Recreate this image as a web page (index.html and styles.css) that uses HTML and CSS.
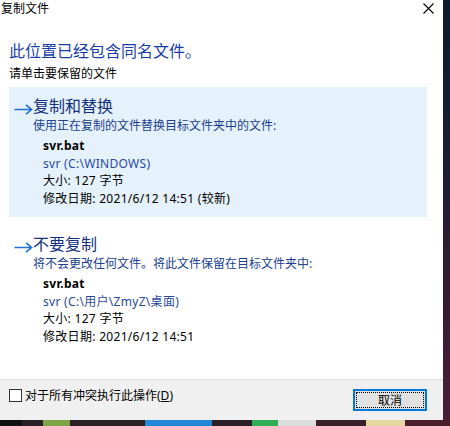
FILE: index.html
```html
<!DOCTYPE html>
<html lang="zh-CN">
<head>
  <meta charset="UTF-8">
  <title>复制文件</title>
  <link rel="stylesheet" href="styles.css">
</head>
<body>
  <div class="screen">
    <div class="dialog">

      <!-- title bar -->
      <div class="titlebar">
        <span class="title">复制文件</span>
        <svg class="close" width="11" height="11" viewBox="0 0 11 11">
          <path d="M0.5 0.5 L10.5 10.5 M10.5 0.5 L0.5 10.5" stroke="#000" stroke-width="1.1" fill="none"/>
        </svg>
      </div>

      <div class="content">
        <h1 class="instruction">此位置已经包含同名文件。</h1>
        <p class="hint">请单击要保留的文件</p>

        <!-- replace -->
        <div class="option selected">
          <svg class="arrow" width="19" height="11" viewBox="0 0 19 11">
            <path d="M0.5 5.5 H17.5 M12 0.8 L17.6 5.5 L12 10.2" stroke="#1f6fd8" stroke-width="1.6" fill="none"/>
          </svg>
          <div class="option-body">
            <div class="option-title">复制和替换</div>
            <div class="option-note">使用正在复制的文件替换目标文件夹中的文件:</div>
            <div class="file-info">
              <div class="file-name">svr.bat</div>
              <div class="file-folder">svr (C:\WINDOWS)</div>
              <div>大小: 127 字节</div>
              <div>修改日期: 2021/6/12 14:51 (较新)</div>
            </div>
          </div>
        </div>

        <!-- skip -->
        <div class="option">
          <svg class="arrow" width="19" height="11" viewBox="0 0 19 11">
            <path d="M0.5 5.5 H17.5 M12 0.8 L17.6 5.5 L12 10.2" stroke="#1f6fd8" stroke-width="1.6" fill="none"/>
          </svg>
          <div class="option-body">
            <div class="option-title">不要复制</div>
            <div class="option-note">将不会更改任何文件。将此文件保留在目标文件夹中:</div>
            <div class="file-info">
              <div class="file-name">svr.bat</div>
              <div class="file-folder">svr (C:\用户\ZmyZ\桌面)</div>
              <div>大小: 127 字节</div>
              <div>修改日期: 2021/6/12 14:51</div>
            </div>
          </div>
        </div>
      </div>

      <!-- footer -->
      <div class="footer">
        <label class="check">
          <span class="box"></span>
          <span>对于所有冲突执行此操作(<u>D</u>)</span>
        </label>
        <button class="cancel"><span class="focus">取消</span></button>
      </div>
    </div>
    <div class="edge"></div>
  </div>
  <div class="desktop-strip"></div>
</body>
</html>
```

FILE: styles.css
```css
* {
  margin: 0;
  padding: 0;
  box-sizing: border-box;
}

html, body {
  width: 450px;
  height: 426px;
  overflow: hidden;
}

body {
  font-family: "Noto Sans", "Noto Sans CJK SC", sans-serif;
  font-size: 12px;
  color: #000;
  background: #1a1420;
}

.screen {
  display: flex;
  height: 420px;
}

.dialog {
  width: 443px;
  height: 420px;
  background: #fff;
  display: flex;
  flex-direction: column;
}

/* right side of the desktop */
.edge {
  flex: 1;
  background: linear-gradient(to bottom, #0c1a2e 0%, #1c1d33 40%, #3a1b34 75%, #4a1d38 100%);
}

/* Title bar */
.titlebar {
  height: 30px;
  display: flex;
  align-items: flex-start;
  justify-content: space-between;
  padding: 0 9px 0 1px;
}

.title {
  font-size: 12px;
  line-height: 17px;
}

.close {
  margin-top: 3px;
}

.content {
  flex: 1;
  padding: 10px 16px 0 9px;
}

.instruction {
  font-size: 16px;
  font-weight: normal;
  line-height: 22px;
  color: #1b3fa6;
}

.hint {
  line-height: 18px;
  margin-top: 3px;
}

/* options */
.option {
  display: flex;
  padding: 9px 0 10px 5px;
  margin-top: 4px;
}

.option + .option {
  margin-top: 8px;
}

.option.selected {
  background: #e5f1fb;
}

.arrow {
  margin-top: 8px;
  flex-shrink: 0;
}

.option-title {
  font-size: 16px;
  line-height: 21px;
  color: #14307f;
}

.option-note {
  line-height: 18px;
  color: #20408f;
}

.file-info {
  margin-top: 2px;
  padding-left: 10px;
  line-height: 17.5px;
  letter-spacing: 0.3px;
}

.file-name {
  font-weight: bold;
}

.file-folder {
  color: #2b4a9e;
}

/* Footer */
.footer {
  height: 41px;
  background: #f0f0f0;
  border-top: 1px solid #dfdfdf;
  display: flex;
  align-items: flex-start;
  justify-content: space-between;
  padding: 9px 16px 0 9px;
}

.check {
  display: flex;
  align-items: center;
  gap: 3px;
  line-height: 13px;
}

.box {
  width: 13px;
  height: 13px;
  border: 1px solid #333;
  background: #fff;
}

.cancel {
  width: 74px;
  height: 22px;
  border: 2px solid #0078d7;
  background: #e1e1e1;
  padding: 1px;
  font-family: inherit;
  font-size: 12px;
  color: #000;
}

.cancel .focus {
  display: flex;
  align-items: center;
  justify-content: center;
  height: 100%;
  border: 1px dotted #000;
}

/* bottom of the desktop under the dialog */
.desktop-strip {
  height: 6px;
  background: linear-gradient(to right,
    #111 0, #111 22px,
    #2a1f24 22px, #2a1f24 43px,
    #7ea445 43px, #7ea445 70px,
    #2b2024 70px, #2b2024 145px,
    #2287d8 145px, #2287d8 212px,
    #2b1e24 212px, #2b1e24 252px,
    #2fae55 252px, #2fae55 278px,
    #dcdcdc 278px, #dcdcdc 316px,
    #3a1f28 316px, #3a1f28 366px,
    #e6d6a2 366px, #e6d6a2 405px,
    #4a1d2c 405px, #4a1d2c 450px);
}
```
